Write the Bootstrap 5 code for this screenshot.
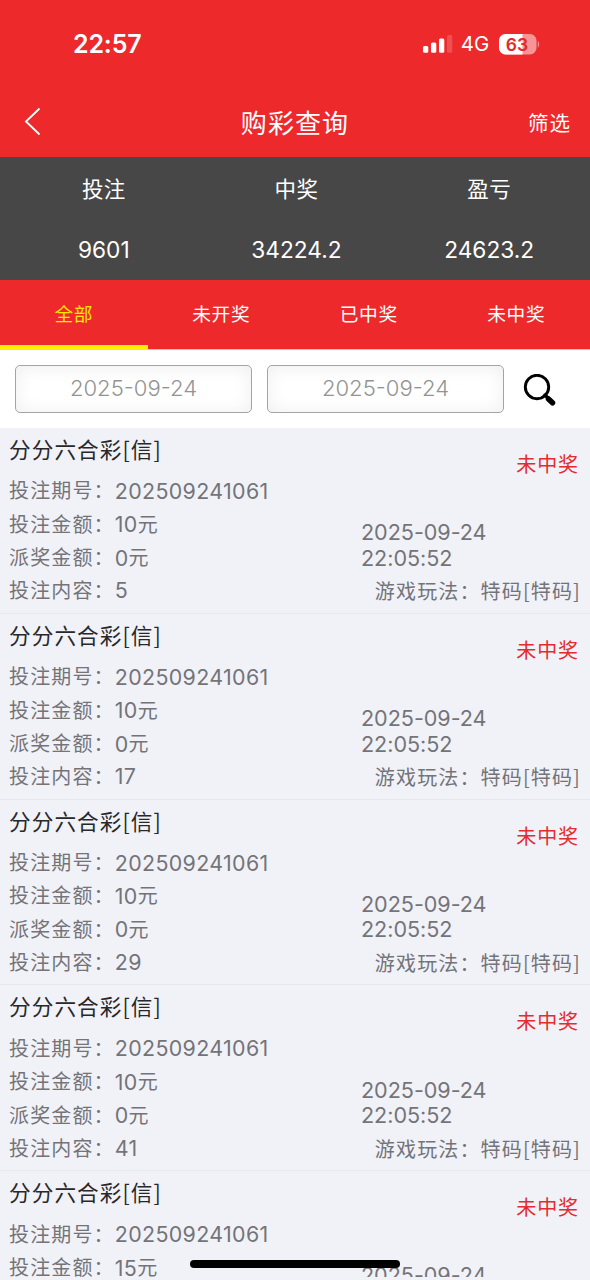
<!DOCTYPE html>
<html lang="zh-CN">
<head>
<meta charset="utf-8">
<meta name="viewport" content="width=device-width, initial-scale=1">
<title>购彩查询</title>
<link href="https://cdn.jsdelivr.net/npm/bootstrap@5.3.0/dist/css/bootstrap.min.css" rel="stylesheet">
<style>
  :root { --brand: #ed292b; --slate: #474747; --page: #f1f2f8; }
  body { font-family: Inter, "Noto Sans CJK SC", sans-serif; background: var(--page); font-size: 20px; }
  .screen { height: 1277px; }
  .brand-bg { background: var(--brand); }
  .status-bar { height: 88px; padding: 0 50px 0 73px; }
  .clock { font-size: 25px; font-weight: 600; letter-spacing: -.15px; padding-top: 2px; }
  .network { font-size: 20.5px; letter-spacing: -.2px; margin: 0 9px 0 8px; padding-top: 1px; }
  .title-bar { height: 69px; padding: 2px 19px 0 23px; }
  .page-title { font-size: 26px; letter-spacing: 1.1px; margin-left: -4px; }
  .filter-link { font-size: 20.5px; letter-spacing: 1px; flex: 1 1 0; padding-top: 2px; }
  .back-link { flex: 1 1 0; line-height: 0; padding-bottom: 4px; }
  .totals { background: var(--slate); height: 123px; padding: 2px 4.5px 0 7.5px; font-size: 22.7px; }
  .totals .cjk { font-size: 21.5px; letter-spacing: .4px; }
  .totals .row > div { height: 61px; }
  .tabs { height: 69.5px; font-size: 18.7px; border-bottom: 1.5px solid #f3b9b9; letter-spacing: .6px; }
  .tabs .nav-link { height: 69.5px; border-radius: 0; color: #fff; border-bottom: 5px solid transparent; }
  .tabs .nav-link span { padding-top: 6px; }
  .tabs .nav-link.active { color: #ffe800; border-color: #ffee00; }
  .search { height: 78.5px; padding: 0 34px 0 15px; gap: 15px; }
  .date-field { width: 237px; height: 48px; border: 1.5px solid #a4a4a4; border-radius: 5px; color: #939393; font-size: 22.1px;
    box-shadow: inset 0 1px 18px rgba(0,0,0,.07); text-align: center; padding: 0 0 1px; background: #fff; font-weight: 300; }
  .bet { height: 185.8px; border-bottom: 1.5px solid #e7e7ec; color: #747478; padding: 0 10px 0 9px; }
  .bet-name { height: 44px; margin-bottom: 2.3px; padding-bottom: 1.5px; color: #28282a; font-family: "Noto Sans CJK SC", sans-serif; font-size: 21.6px; letter-spacing: 1.1px; }
  .bet-line { height: 33.4px; letter-spacing: 1.15px; padding-top: 1px; }
  .bet-line .num { letter-spacing: .35px; font-size: 21.4px; line-height: 28px; padding-bottom: 1px; }
  .bet-line.last-line { padding-top: 0; }
  .bet-play { font-family: "Noto Sans CJK SC", sans-serif; margin-right: -1px; }
  .bet-state { color: #e32b30; letter-spacing: .9px; margin-top: 23px; line-height: 28px; padding-right: 1px; }
  .bet-time { width: 219px; padding-right: 80px; line-height: 25.6px; font-size: 21.6px; margin-bottom: 3px; letter-spacing: -.05px; }
  .home-bar { width: 210px; height: 8px; bottom: 12px; left: 190px; }
</style>
</head>
<body>
<div class="screen overflow-hidden">
  <header class="brand-bg text-white">
    <div class="status-bar d-flex align-items-center justify-content-between">
      <span class="clock">22:57</span>
      <div class="d-flex align-items-center">
        <svg width="30" height="18" viewBox="0 0 30 18" fill="#fff"><rect x="0" y="11" width="5.3" height="6.8" rx="1.5"/><rect x="8" y="7.5" width="5.3" height="10.3" rx="1.5"/><rect x="16" y="3.5" width="5.3" height="14.3" rx="1.5"/><rect x="24" y="0" width="5.3" height="17.8" rx="1.5" opacity=".18"/></svg>
        <span class="network">4G</span>
        <svg width="42" height="22" viewBox="0 0 42 22"><rect x="1" y="1" width="37.500" height="20.500" rx="6.500" fill="#f79496"/><path d="M7.500 1H24.500v20.500H7.500A6.500 6.500 0 0 1 1 15V7.500A6.500 6.500 0 0 1 7.500 1z" fill="#fff"/><path d="M39.800 8c1.800 1 1.800 5.500 0 6.500z" fill="#f79496"/><text x="19" y="17.600" text-anchor="middle" font-size="17.500" font-weight="600" fill="#e5282b">63</text></svg>
      </div>
    </div>
    <div class="title-bar d-flex align-items-center">
      <span class="back-link"><svg width="20" height="30" viewBox="0 0 20 30" fill="none" stroke="#fff" stroke-width="1.800"><path d="M16.500 1.500 3 14.500l13.500 13"/></svg></span>
      <span class="page-title">购彩查询</span>
      <span class="filter-link text-end">筛选</span>
    </div>
  </header>

  <section class="totals text-white text-center">
    <div class="row g-0">
      <div class="col-4 d-flex align-items-center justify-content-center cjk">投注</div>
      <div class="col-4 d-flex align-items-center justify-content-center cjk">中奖</div>
      <div class="col-4 d-flex align-items-center justify-content-center cjk">盈亏</div>
      <div class="col-4 d-flex align-items-center justify-content-center">9601</div>
      <div class="col-4 d-flex align-items-center justify-content-center">34224.2</div>
      <div class="col-4 d-flex align-items-center justify-content-center">24623.2</div>
    </div>
  </section>

  <nav class="tabs brand-bg nav nav-justified flex-nowrap">
    <a class="nav-link active p-0 d-flex align-items-center justify-content-center w-25"><span>全部</span></a>
    <a class="nav-link p-0 d-flex align-items-center justify-content-center w-25"><span>未开奖</span></a>
    <a class="nav-link p-0 d-flex align-items-center justify-content-center w-25"><span>已中奖</span></a>
    <a class="nav-link p-0 d-flex align-items-center justify-content-center w-25"><span>未中奖</span></a>
  </nav>

  <form class="search bg-white d-flex align-items-center">
    <div class="date-field d-flex align-items-center justify-content-center">2025-09-24</div>
    <div class="date-field d-flex align-items-center justify-content-center">2025-09-24</div>
    <svg class="ms-auto mt-1" width="33" height="34" viewBox="0 0 33 34" fill="none" stroke="#000" stroke-linecap="round"><circle cx="14" cy="13" r="11.700" stroke-width="2.900"/><path d="M22 21l3 3" stroke-width="3.500"/><path d="M25.500 25l4 3.800" stroke-width="5.500"/></svg>
  </form>

  <main id="bets"></main>
</div>
<div class="home-bar position-fixed bg-black rounded-pill"></div>

<script src="https://cdn.jsdelivr.net/npm/bootstrap@5.3.0/dist/js/bootstrap.bundle.min.js"></script>
<script>
  const bets = [[10, 5], [10, 17], [10, 29], [10, 41], [15, null]];
  document.getElementById('bets').innerHTML = bets.map(([amount, pick]) => `
    <article class="bet">
      <div class="d-flex justify-content-between">
        <div>
          <div class="bet-name d-flex align-items-center">分分六合彩[信]</div>
          <div class="bet-line d-flex align-items-center">投注期号：<span class="num">202509241061</span></div>
          <div class="bet-line d-flex align-items-center">投注金额：<span class="num">${amount}</span>元</div>
          ${pick === null ? '<div class="bet-line"></div>' : '<div class="bet-line d-flex align-items-center">派奖金额：<span class="num">0</span>元</div>'}
        </div>
        <div class="d-flex flex-column justify-content-between">
          <div class="bet-state text-end">未中奖</div>
          <div class="bet-time">2025-09-24 ${pick === null ? '<br>&nbsp;' : '22:05:52'}</div>
        </div>
      </div>
      ${pick === null ? '' : `<div class="bet-line last-line d-flex align-items-center justify-content-between">
        <span>投注内容：<span class="num">${pick}</span></span>
        <span class="bet-play">游戏玩法：特码[特码]</span>
      </div>`}
    </article>`).join('');
</script>
</body>
</html>
